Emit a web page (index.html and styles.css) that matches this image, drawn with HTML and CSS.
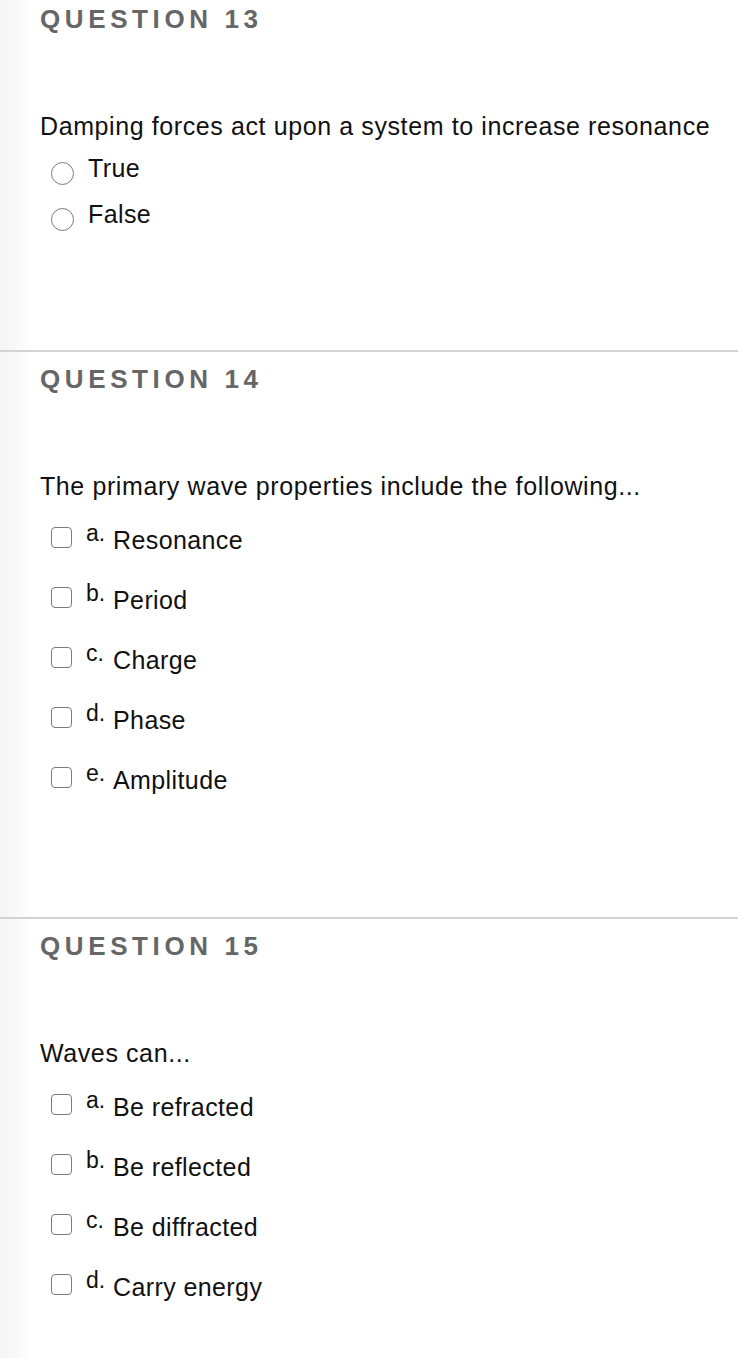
FILE: index.html
```html
<!DOCTYPE html>
<html>
<head>
<meta charset="utf-8">
<link rel="stylesheet" href="styles.css">
</head>
<body>
<div class="page">
  <section class="question first">
    <h2 class="q-title">QUESTION 13</h2>
    <p class="q-text">Damping forces act upon a system to increase resonance</p>
    <ul class="radios">
      <li class="radio-row"><span class="radio"></span><span class="opt">True</span></li>
      <li class="radio-row"><span class="radio"></span><span class="opt">False</span></li>
    </ul>
  </section>
  <section class="question">
    <h2 class="q-title">QUESTION 14</h2>
    <p class="q-text">The primary wave properties include the following...</p>
    <ul class="checks">
      <li class="check-row"><span class="box"></span><span class="letter">a.</span><span class="opt">Resonance</span></li>
      <li class="check-row"><span class="box"></span><span class="letter">b.</span><span class="opt">Period</span></li>
      <li class="check-row"><span class="box"></span><span class="letter">c.</span><span class="opt">Charge</span></li>
      <li class="check-row"><span class="box"></span><span class="letter">d.</span><span class="opt">Phase</span></li>
      <li class="check-row"><span class="box"></span><span class="letter">e.</span><span class="opt">Amplitude</span></li>
    </ul>
  </section>
  <section class="question last">
    <h2 class="q-title">QUESTION 15</h2>
    <p class="q-text">Waves can...</p>
    <ul class="checks">
      <li class="check-row"><span class="box"></span><span class="letter">a.</span><span class="opt">Be refracted</span></li>
      <li class="check-row"><span class="box"></span><span class="letter">b.</span><span class="opt">Be reflected</span></li>
      <li class="check-row"><span class="box"></span><span class="letter">c.</span><span class="opt">Be diffracted</span></li>
      <li class="check-row"><span class="box"></span><span class="letter">d.</span><span class="opt">Carry energy</span></li>
    </ul>
  </section>
</div>
</body>
</html>
```

FILE: styles.css
```css
html, body {
  margin: 0;
  padding: 0;
}
body {
  width: 738px;
  min-height: 1358px;
  font-family: "Liberation Sans", Arial, Helvetica, sans-serif;
  color: #111;
  background: linear-gradient(to right, #f5f5f5 0, #f9f9f9 18px, #fdfdfd 28px, #ffffff 34px);
}
.page {
  display: flex;
  flex-direction: column;
}
.question {
  display: flex;
  flex-direction: column;
  padding: 12px 0 122px 40px;
  border-top: 2px solid #d3d3d3;
}
.question.first {
  border-top: none;
  padding-top: 4px;
  padding-bottom: 117px;
}
.question.last {
  padding-bottom: 40px;
}
.q-title {
  margin: 0;
  font-size: 26px;
  line-height: 30px;
  font-weight: bold;
  letter-spacing: 4.6px;
  color: #666;
}
.q-text {
  margin: 78px 0 0 0;
  font-size: 25px;
  line-height: 28px;
  letter-spacing: 0.6px;
  color: #111;
}
.radios, .checks {
  list-style: none;
  margin: 0;
  padding: 0;
  display: flex;
  flex-direction: column;
}
.radios {
  margin-top: 19px;
  gap: 18px;
}
.radio-row {
  display: flex;
  align-items: center;
  height: 28px;
}
.radio {
  width: 21px;
  height: 21px;
  border: 1.5px solid #7b7b7b;
  border-radius: 50%;
  margin-left: 11px;
  background: #fff;
  flex: none;
}
.radio-row .opt {
  margin-left: 14px;
  margin-top: -10px;
}
.opt {
  font-size: 25px;
  line-height: 28px;
  letter-spacing: 0.4px;
}
.checks {
  margin-top: 21px;
  gap: 26px;
}
.check-row {
  display: flex;
  align-items: flex-start;
  height: 34px;
}
.box {
  width: 19px;
  height: 19px;
  border: 1.5px solid #7b7b7b;
  border-radius: 4px;
  margin: 6px 0 0 11px;
  background: #fff;
  flex: none;
}
.letter {
  font-size: 23px;
  line-height: 24px;
  margin-left: 14px;
  width: 27px;
  flex: none;
}
.check-row .opt {
  margin-top: 5px;
}
```
